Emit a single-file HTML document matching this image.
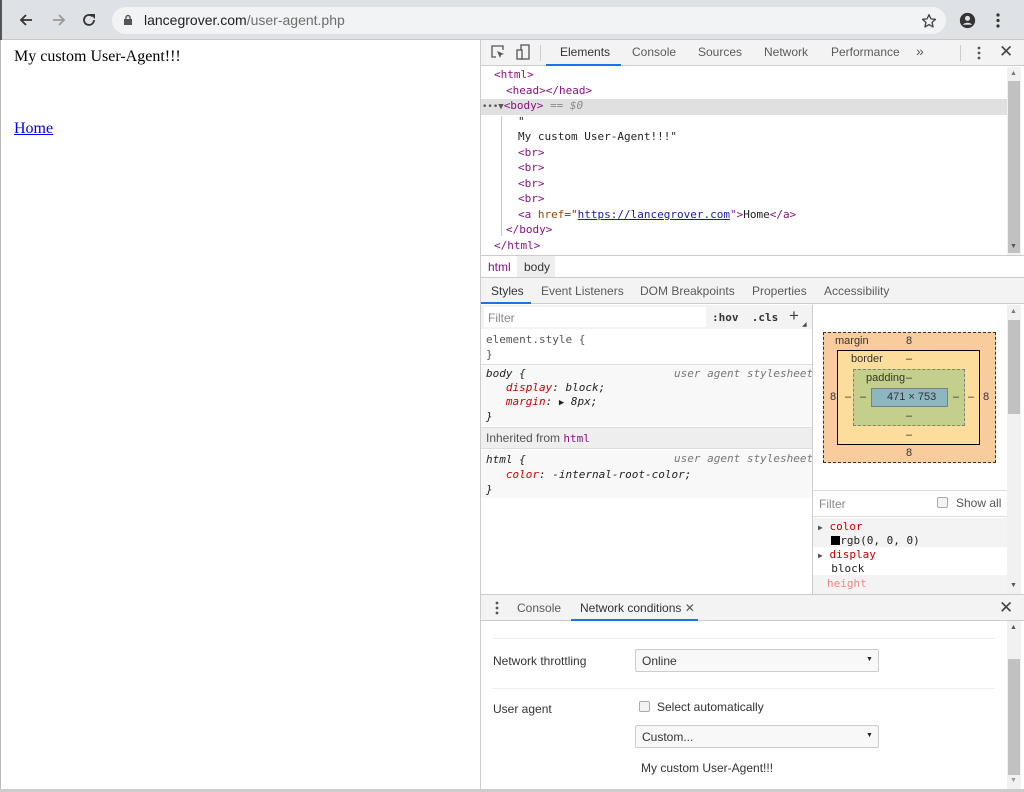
<!DOCTYPE html>
<html><head><meta charset="utf-8"><style>
*{box-sizing:border-box;margin:0;padding:0}
body{width:1024px;height:792px;overflow:hidden;background:#fff;font-family:"Liberation Sans",sans-serif;position:relative}
.a{position:absolute;white-space:nowrap}
.mono{font-family:"DejaVu Sans Mono","Liberation Mono",monospace;font-size:11px}
.tag{color:#881280}
.t{font-size:12px;color:#333}
.g{color:#5a5a5a}
.bm{font-size:11px;color:#333}
</style></head><body>
<!-- browser toolbar -->
<div class="a" style="left:0;top:0;width:1024px;height:40px;background:#dee1e6;border-bottom:1px solid #c8c8c8"></div>
<div class="a" style="left:0;top:0;width:2px;height:40px;background:#555"></div>
<div class="a" style="left:0;top:40px;width:1px;height:752px;background:#bbb"></div>
<svg class="a" style="left:18px;top:12px" width="16" height="16" viewBox="0 0 16 16"><path d="M14 8H3M8 3L3 8l5 5" stroke="#333" stroke-width="1.8" fill="none"/></svg>
<svg class="a" style="left:51px;top:12px" width="16" height="16" viewBox="0 0 16 16"><path d="M2 8h11M8 3l5 5-5 5" stroke="#999" stroke-width="1.8" fill="none"/></svg>
<svg class="a" style="left:81px;top:12px" width="16" height="16" viewBox="0 0 16 16"><path d="M13 8a5 5 0 1 1-1.5-3.6" stroke="#333" stroke-width="1.8" fill="none"/><path d="M9 2h5v5z" fill="#333"/></svg>
<div class="a" style="left:112px;top:7px;width:834px;height:27px;border-radius:14px;background:#f1f3f4"></div>
<svg class="a" style="left:123px;top:14px" width="10" height="12" viewBox="0 0 10 12"><rect x="1" y="5" width="8" height="6" fill="#555"/><path d="M3 5V3.5a2 2 0 0 1 4 0V5" stroke="#555" stroke-width="1.4" fill="none"/></svg>
<div class="a" style="left:144px;top:12px;font-size:14px;color:#202124">lancegrover.com<span style="color:#6d6d6d">/user-agent.php</span></div>
<svg class="a" style="left:921px;top:13px" width="16" height="16" viewBox="0 0 24 24"><path d="M12 2.5l2.9 6.3 6.8.7-5.1 4.6 1.5 6.8L12 17.4l-6.1 3.5 1.5-6.8-5.1-4.6 6.8-.7z" stroke="#444" stroke-width="2" fill="none" stroke-linejoin="round"/></svg>
<svg class="a" style="left:959px;top:12px" width="17" height="17" viewBox="0 0 20 20"><circle cx="10" cy="10" r="9" fill="#333"/><circle cx="10" cy="7.5" r="3" fill="#dee1e6"/><path d="M4.5 15a6.5 5 0 0 1 11 0" fill="#dee1e6"/></svg>
<svg class="a" style="left:996px;top:13px" width="4" height="15"><circle cx="2" cy="2" r="1.6" fill="#333"/><circle cx="2" cy="7.5" r="1.6" fill="#333"/><circle cx="2" cy="13" r="1.6" fill="#333"/></svg>
<!-- page -->
<div class="a" style="left:14px;top:48px;font-family:'Liberation Serif',serif;font-size:16px;color:#000">My custom User-Agent!!!</div>
<div class="a" style="left:14px;top:120px;font-family:'Liberation Serif',serif;font-size:16px;color:#00e;text-decoration:underline">Home</div>
<!-- devtools -->
<div class="a" style="left:480px;top:40px;width:1px;height:752px;background:#ccc"></div>
<div class="a" style="left:481px;top:40px;width:543px;height:26px;background:#f3f3f3;border-bottom:1px solid #ccc"></div>
<svg class="a" style="left:490px;top:44px" width="16" height="16" viewBox="0 0 16 16"><path d="M6 13H2V2h11v4" stroke="#555" stroke-width="1.3" fill="none"/><path d="M7 7l7 3-3 1-1 3z" fill="#555"/></svg>
<svg class="a" style="left:515px;top:44px" width="16" height="16" viewBox="0 0 16 16"><rect x="6" y="1" width="8" height="14" stroke="#555" stroke-width="1.3" fill="none"/><rect x="2" y="6" width="5" height="9" stroke="#555" stroke-width="1.3" fill="#f3f3f3"/></svg>
<div class="a" style="left:540px;top:45px;width:1px;height:16px;background:#ccc"></div>
<div class="a t" style="left:560px;top:45px;color:#333">Elements</div>
<div class="a" style="left:546px;top:64px;width:75px;height:2px;background:#1a73e8"></div>
<div class="a t g" style="left:632px;top:45px">Console</div>
<div class="a t g" style="left:698px;top:45px">Sources</div>
<div class="a t g" style="left:764px;top:45px">Network</div>
<div class="a t g" style="left:831px;top:45px">Performance</div>
<div class="a t g" style="left:916px;top:43px;font-size:14px">»</div>
<div class="a" style="left:960px;top:45px;width:1px;height:16px;background:#ccc"></div>
<svg class="a" style="left:977px;top:46px" width="4" height="14"><circle cx="2" cy="2" r="1.4" fill="#555"/><circle cx="2" cy="7" r="1.4" fill="#555"/><circle cx="2" cy="12" r="1.4" fill="#555"/></svg>
<div class="a" style="left:999px;top:42px;font-size:17px;color:#444">✕</div>
<!-- DOM tree -->
<div class="a" style="left:481px;top:99px;width:526px;height:16px;background:#e0e0e0"></div>
<div class="a mono tag" style="left:494px;top:68px">&lt;html&gt;</div>
<div class="a mono tag" style="left:506px;top:84px">&lt;head&gt;&lt;/head&gt;</div>
<div class="a mono" style="left:482px;top:99px"><span style="color:#555;font-size:9px">•••</span><span style="color:#555;font-size:9px">▼</span><span class="tag">&lt;body&gt;</span> <span style="color:#888;font-style:italic">== $0</span></div>
<div class="a mono" style="left:518px;top:115px;color:#222">"</div>
<div class="a mono" style="left:518px;top:130px;color:#222">My custom User-Agent!!!"</div>
<div class="a mono tag" style="left:518px;top:146px">&lt;br&gt;</div>
<div class="a mono tag" style="left:518px;top:161px">&lt;br&gt;</div>
<div class="a mono tag" style="left:518px;top:177px">&lt;br&gt;</div>
<div class="a mono tag" style="left:518px;top:192px">&lt;br&gt;</div>
<div class="a mono" style="left:518px;top:208px;color:#222"><span class="tag">&lt;a </span><span style="color:#994500">href</span><span class="tag">="</span><span style="color:#1a1aa6;text-decoration:underline">https://lancegrover.com</span><span class="tag">"&gt;</span>Home<span class="tag">&lt;/a&gt;</span></div>
<div class="a mono tag" style="left:506px;top:223px">&lt;/body&gt;</div>
<div class="a mono tag" style="left:494px;top:239px">&lt;/html&gt;</div>
<div class="a" style="left:501px;top:116px;width:1px;height:120px;background:#a8c7fa"></div>
<div class="a" style="left:1007px;top:67px;width:14px;height:188px;background:#f1f1f1"></div>
<div class="a" style="left:1008px;top:81px;width:12px;height:172px;background:#c1c1c1"></div>
<div class="a" style="left:1010px;top:70px;font-size:7px;color:#777">▲</div>
<div class="a" style="left:1010px;top:243px;font-size:7px;color:#555">▼</div>
<div class="a" style="left:481px;top:255px;width:543px;height:1px;background:#ccc"></div>
<!-- breadcrumbs -->
<div class="a" style="left:517px;top:256px;width:38px;height:21px;background:#eee"></div>
<div class="a" style="left:488px;top:260px;font-size:12px;color:#881280">html</div>
<div class="a" style="left:524px;top:260px;font-size:12px;color:#333">body</div>
<div class="a" style="left:481px;top:277px;width:543px;height:27px;background:#f3f3f3;border-top:1px solid #ccc;border-bottom:1px solid #ccc"></div>
<div class="a t" style="left:491px;top:284px">Styles</div>
<div class="a" style="left:481px;top:302px;width:50px;height:2px;background:#1a73e8"></div>
<div class="a t g" style="left:541px;top:284px">Event Listeners</div>
<div class="a t g" style="left:640px;top:284px">DOM Breakpoints</div>
<div class="a t g" style="left:752px;top:284px">Properties</div>
<div class="a t g" style="left:824px;top:284px">Accessibility</div>
<!-- styles pane -->
<div class="a" style="left:481px;top:305px;width:331px;height:24px;background:#f3f3f3"></div>
<div class="a" style="left:484px;top:307px;width:222px;height:20px;background:#fff"></div>
<div class="a" style="left:488px;top:311px;font-size:12px;color:#888">Filter</div>
<div class="a mono" style="left:712px;top:311px;font-weight:bold;color:#333">:hov&nbsp;&nbsp;.cls</div>
<div class="a" style="left:789px;top:306px;font-size:17px;color:#444">+</div>
<div class="a" style="left:802px;top:321px;font-size:6px;color:#444">◢</div>
<div class="a mono" style="left:486px;top:332px;line-height:15px;color:#555;white-space:pre">element.style {
}</div>
<div class="a" style="left:481px;top:364px;width:331px;height:62px;background:#f8f8f8;border-top:1px solid #ddd"></div>
<div class="a mono" style="left:486px;top:367px;line-height:14px;white-space:pre;font-style:italic;color:#222">body {
   <span style="color:#c80000">display</span>: block;
   <span style="color:#c80000">margin</span>: <span style="font-style:normal;font-size:9px">▶</span> 8px;
}</div>
<div class="a mono" style="left:674px;top:367px;font-style:italic;color:#777">user agent stylesheet</div>
<div class="a" style="left:481px;top:427px;width:331px;height:22px;background:#eee;border-top:1px solid #ddd;border-bottom:1px solid #ddd"></div>
<div class="a" style="left:486px;top:431px;font-size:12px;color:#555">Inherited from <span class="mono" style="color:#881280">html</span></div>
<div class="a" style="left:481px;top:450px;width:331px;height:48px;background:#f8f8f8"></div>
<div class="a mono" style="left:486px;top:452px;line-height:15px;white-space:pre;font-style:italic;color:#222">html {
   <span style="color:#c80000">color</span>: -internal-root-color;
}</div>
<div class="a mono" style="left:674px;top:452px;font-style:italic;color:#777">user agent stylesheet</div>
<div class="a" style="left:812px;top:305px;width:1px;height:290px;background:#ccc"></div>
<!-- box model -->
<div class="a" style="left:823px;top:332px;width:173px;height:131px;background:#f9cc9d;border:1px dashed #333"></div>
<div class="a" style="left:837px;top:350px;width:143px;height:95px;background:#fddd9b;border:1px solid #000"></div>
<div class="a" style="left:853px;top:369px;width:112px;height:57px;background:#c3cf8a;border:1px dashed #808080"></div>
<div class="a" style="left:871px;top:388px;width:77px;height:19px;background:#8cb6c0;border:1px solid #808080"></div>
<div class="a bm" style="left:835px;top:335px">margin</div><div class="a bm" style="left:906px;top:335px">8</div>
<div class="a bm" style="left:851px;top:353px">border</div><div class="a bm" style="left:906px;top:353px">–</div>
<div class="a bm" style="left:866px;top:372px">padding</div><div class="a bm" style="left:906px;top:372px">–</div>
<div class="a bm" style="left:887px;top:391px">471 × 753</div>
<div class="a bm" style="left:830px;top:391px">8</div><div class="a bm" style="left:983px;top:391px">8</div>
<div class="a bm" style="left:845px;top:391px">–</div><div class="a bm" style="left:860px;top:391px">–</div>
<div class="a bm" style="left:953px;top:391px">–</div><div class="a bm" style="left:968px;top:391px">–</div>
<div class="a bm" style="left:906px;top:410px">–</div><div class="a bm" style="left:906px;top:429px">–</div><div class="a bm" style="left:906px;top:447px">8</div>
<div class="a" style="left:813px;top:490px;width:194px;height:1px;background:#ddd"></div>
<div class="a" style="left:819px;top:497px;font-size:12px;color:#888">Filter</div>
<div class="a" style="left:937px;top:497px;width:11px;height:11px;border:1px solid #aaa;border-radius:2px;background:#f3f3f3"></div>
<div class="a" style="left:956px;top:496px;font-size:12px;color:#555">Show all</div>
<div class="a" style="left:813px;top:516px;width:194px;height:1px;background:#ddd"></div>
<div class="a" style="left:813px;top:518px;width:194px;height:29px;background:#f3f3f3"></div>
<div class="a" style="left:813px;top:575px;width:194px;height:20px;background:#f3f3f3"></div>
<div class="a mono" style="left:818px;top:521px;line-height:12.5px;white-space:pre;color:#222"><span style="font-size:8px;color:#555">▶</span> <span style="color:#c80000">color</span>
  <span style="display:inline-block;width:9px;height:9px;background:#000;vertical-align:-1px"></span>rgb(0, 0, 0)</div>
<div class="a mono" style="left:818px;top:549px;line-height:12.5px;white-space:pre;color:#222"><span style="font-size:8px;color:#555">▶</span> <span style="color:#c80000">display</span>
  block</div>
<div class="a mono" style="left:827px;top:577px;color:#e88">height</div>
<div class="a" style="left:1007px;top:305px;width:14px;height:290px;background:#f1f1f1"></div>
<div class="a" style="left:1008px;top:320px;width:12px;height:94px;background:#c1c1c1"></div>
<div class="a" style="left:1010px;top:308px;font-size:7px;color:#777">▲</div>
<div class="a" style="left:1010px;top:582px;font-size:7px;color:#555">▼</div>
<!-- drawer -->
<div class="a" style="left:481px;top:594px;width:543px;height:27px;background:#f3f3f3;border-top:1px solid #ccc;border-bottom:1px solid #ccc"></div>
<svg class="a" style="left:495px;top:601px" width="4" height="14"><circle cx="2" cy="2" r="1.4" fill="#555"/><circle cx="2" cy="7" r="1.4" fill="#555"/><circle cx="2" cy="12" r="1.4" fill="#555"/></svg>
<div class="a t g" style="left:517px;top:601px">Console</div>
<div class="a t" style="left:580px;top:601px">Network conditions <span style="color:#555">✕</span></div>
<div class="a" style="left:571px;top:619px;width:127px;height:2px;background:#1a73e8"></div>
<div class="a" style="left:999px;top:598px;font-size:17px;color:#444">✕</div>
<div class="a" style="left:492px;top:638px;width:503px;height:1px;background:#eee"></div>
<div class="a" style="left:493px;top:654px;font-size:12px;color:#333">Network throttling</div>
<div class="a" style="left:635px;top:649px;width:244px;height:23px;background:#f8f8f8;border:1px solid #ccc;border-radius:2px"></div>
<div class="a" style="left:642px;top:654px;font-size:12px;color:#333">Online</div>
<div class="a" style="left:866px;top:656px;font-size:7px;color:#222">▼</div>
<div class="a" style="left:492px;top:688px;width:503px;height:1px;background:#eee"></div>
<div class="a" style="left:493px;top:702px;font-size:12px;color:#333">User agent</div>
<div class="a" style="left:639px;top:701px;width:11px;height:11px;border:1px solid #aaa;border-radius:2px;background:#f3f3f3"></div>
<div class="a" style="left:657px;top:700px;font-size:12px;color:#333">Select automatically</div>
<div class="a" style="left:635px;top:725px;width:244px;height:23px;background:#f8f8f8;border:1px solid #ccc;border-radius:2px"></div>
<div class="a" style="left:642px;top:730px;font-size:12px;color:#333">Custom...</div>
<div class="a" style="left:866px;top:732px;font-size:7px;color:#222">▼</div>
<div class="a" style="left:641px;top:761px;font-size:12px;color:#333">My custom User-Agent!!!</div>
<div class="a" style="left:1007px;top:621px;width:14px;height:168px;background:#f1f1f1"></div>
<div class="a" style="left:1008px;top:659px;width:12px;height:116px;background:#c1c1c1"></div>
<div class="a" style="left:1010px;top:624px;font-size:7px;color:#555">▲</div>
<div class="a" style="left:1010px;top:777px;font-size:7px;color:#999">▼</div>
<div class="a" style="left:0;top:789px;width:1024px;height:3px;background:#ccc"></div>
</body></html>
